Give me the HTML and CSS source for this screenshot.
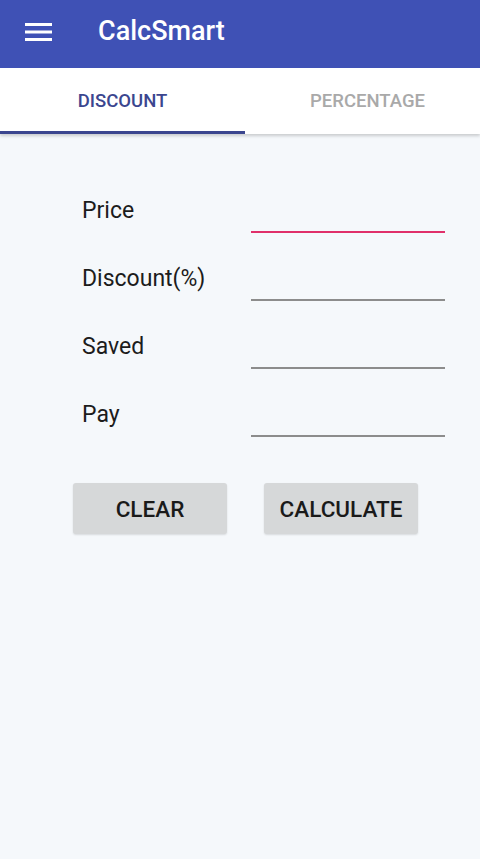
FILE: index.html
```html
<!DOCTYPE html>
<html>
<head>
<meta charset="utf-8">
<link rel="stylesheet" href="styles.css">
</head>
<body>
<header class="appbar">
  <svg class="menu" width="27" height="18" viewBox="0 0 27 18">
    <rect x="0" y="0" width="27" height="3" fill="#fff"/>
    <rect x="0" y="7.5" width="27" height="3" fill="#fff"/>
    <rect x="0" y="15" width="27" height="3" fill="#fff"/>
  </svg>
  <h1 class="title">CalcSmart</h1>
</header>
<nav class="tabs">
  <div class="tab active">DISCOUNT</div>
  <div class="tab">PERCENTAGE</div>
</nav>
<main class="content">
  <div class="form">
    <div class="row"><span class="label">Price</span><span class="field focused"></span></div>
    <div class="row"><span class="label">Discount(%)</span><span class="field"></span></div>
    <div class="row"><span class="label">Saved</span><span class="field"></span></div>
    <div class="row"><span class="label">Pay</span><span class="field"></span></div>
  </div>
  <div class="buttons">
    <button class="btn">CLEAR</button>
    <button class="btn">CALCULATE</button>
  </div>
</main>
</body>
</html>
```
FILE: styles.css
```css
* { box-sizing: border-box; }
html, body { margin: 0; padding: 0; }
body {
  width: 480px;
  height: 859px;
  background: #f5f8fb;
  font-family: Roboto, "Liberation Sans", sans-serif;
  overflow: hidden;
}
.appbar {
  height: 68px;
  background: #3f51b5;
  display: flex;
  align-items: center;
  padding: 0 0 6px 25px;
  position: relative;
  z-index: 2;
}
.menu { display: block; margin-top: 2px; }
.title {
  margin: 0 0 0 46px;
  color: #fff;
  font-size: 27px;
  font-weight: 500;
  letter-spacing: 0;
}
.tabs {
  height: 66px;
  background: #fff;
  display: flex;
  overflow: hidden;
  box-shadow: 0 2px 3px rgba(0,0,0,0.18);
  position: relative;
  z-index: 1;
}
.tab {
  flex: 0 0 245px;
  display: flex;
  align-items: center;
  justify-content: center;
  font-size: 18.5px;
  font-weight: 500;
  color: #a9a9a9;
  padding-top: 3px;
  border-bottom: 3px solid transparent;
}
.tab.active {
  color: #3b468f;
  border-bottom-color: #3b468f;
}
.content {
  padding: 62px 35px 0 82px;
}
.form {
  display: flex;
  flex-direction: column;
}
.row {
  height: 68px;
  display: flex;
  justify-content: space-between;
}
.label {
  font-size: 23px;
  color: #1c1c1c;
  line-height: 30px;
}
.field {
  width: 194px;
  height: 37px;
  border-bottom: 2px solid #8c8c8c;
}
.field.focused {
  border-bottom-color: #e0306a;
}
.buttons {
  display: flex;
  gap: 37px;
  margin: 15px 0 0 -9px;
}
.btn {
  width: 154px;
  height: 51px;
  border: none;
  border-radius: 3px;
  background: #d6d8d9;
  font-family: Roboto, "Liberation Sans", sans-serif;
  font-size: 22.5px;
  font-weight: 500;
  color: #1a1a1a;
  box-shadow: 0 1px 2px rgba(0,0,0,0.12);
  padding: 0;
}
```
